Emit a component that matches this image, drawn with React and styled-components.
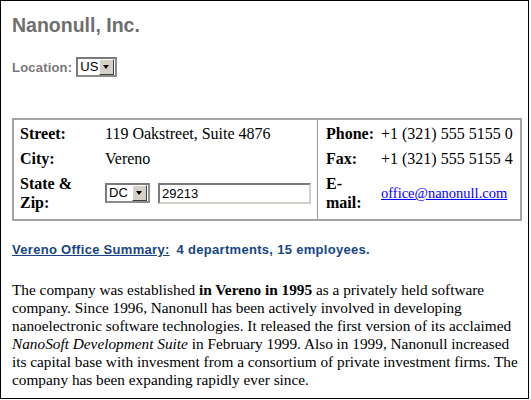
import styled, { createGlobalStyle } from "styled-components";

const GlobalStyle = createGlobalStyle`
  body {
    margin: 0;
    background: #ffffff;
  }
`;

const App = () => {
  return (
    <>
      <GlobalStyle />
      <Frame>
        <Title>Nanonull, Inc.</Title>
        <LocationRow>
          <LocationLabel>Location:</LocationLabel>
          <SelectBox $width={41}>
            <SelectText>US</SelectText>
            <SelectButton />
          </SelectBox>
        </LocationRow>

        <AddressTable>
          <AddressCell>
            <FieldGrid $labelWidth={78} $gap={7}>
              <FieldLabel>Street:</FieldLabel>
              <FieldValue>119 Oakstreet, Suite 4876</FieldValue>
              <FieldLabel>City:</FieldLabel>
              <FieldValue>Vereno</FieldValue>
              <FieldLabel $tall>State &amp; Zip:</FieldLabel>
              <FieldValue $tall>
                <ZipRow>
                  <SelectBox $width={45}>
                    <SelectText>DC</SelectText>
                    <SelectButton />
                  </SelectBox>
                  <ZipInput>29213</ZipInput>
                </ZipRow>
              </FieldValue>
            </FieldGrid>
          </AddressCell>
          <ContactCell>
            <FieldGrid $labelWidth={48} $gap={7}>
              <FieldLabel>Phone:</FieldLabel>
              <FieldValue>+1 (321) 555 5155 0</FieldValue>
              <FieldLabel>Fax:</FieldLabel>
              <FieldValue>+1 (321) 555 5155 4</FieldValue>
              <FieldLabel $tall>E-mail:</FieldLabel>
              <FieldValue $tall>
                <MailLink href="#">office@nanonull.com</MailLink>
              </FieldValue>
            </FieldGrid>
          </ContactCell>
        </AddressTable>

        <Summary>
          <SummaryLink href="#">Vereno Office Summary:</SummaryLink>
          <span>4 departments, 15 employees.</span>
        </Summary>

        {/* line breaks follow the reference rendering */}
        <Description>
          The company was established <b>in Vereno in 1995</b> as a privately
          held software
          <br />
          company. Since 1996, Nanonull has been actively involved in
          developing
          <br />
          nanoelectronic software technologies. It released the first version
          of its acclaimed
          <br />
          <i>NanoSoft Development Suite</i> in February 1999. Also in 1999,
          Nanonull increased
          <br />
          its capital base with invesment from a consortium of private
          investment firms. The
          <br />
          company has been expanding rapidly ever since.
        </Description>
      </Frame>
    </>
  );
};

export default App;

const Frame = styled.div`
  box-sizing: border-box;
  width: 529px;
  height: 399px;
  border: 1px solid #000000;
  padding: 13px 11px 0 11px;
  overflow: hidden;
`;

const Title = styled.h1`
  margin: 0;
  font-family: "Liberation Sans", Arial, sans-serif;
  font-size: 19.5px;
  line-height: 22px;
  font-weight: bold;
  color: #6f6f6f;
`;

const LocationRow = styled.div`
  display: flex;
  align-items: center;
  gap: 4px;
  margin-top: 21px;
  height: 20px;
`;

const LocationLabel = styled.span`
  font-family: "Liberation Sans", Arial, sans-serif;
  font-size: 13px;
  font-weight: bold;
  letter-spacing: 0.2px;
  color: #787878;
`;

const SelectBox = styled.div`
  box-sizing: border-box;
  display: flex;
  align-items: center;
  justify-content: space-between;
  width: ${(props) => props.$width}px;
  height: 20px;
  padding: 0 1px 0 2px;
  background: #ffffff;
  border: 2px solid;
  border-color: #7a7a7a #8c8c8c #8c8c8c #7a7a7a;
`;

const SelectText = styled.span`
  font-family: "Liberation Sans", Arial, sans-serif;
  font-size: 13px;
  color: #000000;
  line-height: 16px;
`;

const SelectButton = styled.span`
  box-sizing: border-box;
  position: relative;
  width: 15px;
  height: 16px;
  background: #d4d0c8;
  border: 1px solid;
  border-color: #ffffff #404040 #404040 #ffffff;

  &::after {
    content: "";
    position: absolute;
    left: 3px;
    top: 5px;
    border-left: 3.5px solid transparent;
    border-right: 3.5px solid transparent;
    border-top: 4px solid #000000;
  }
`;

const AddressTable = styled.div`
  box-sizing: border-box;
  display: grid;
  grid-template-columns: 304px 1fr;
  width: 510px;
  margin-top: 41px;
  border: 2px solid #a4a4a4;
`;

const AddressCell = styled.div`
  padding: 1px 6px 4px 6px;
  border-right: 1px solid #9a9a9a;
`;

const ContactCell = styled.div`
  padding: 1px 4px 4px 8px;
`;

const FieldGrid = styled.div`
  display: grid;
  grid-template-columns: ${(props) => props.$labelWidth}px 1fr;
  grid-template-rows: 25px 25px 44px;
  column-gap: ${(props) => props.$gap}px;
  align-items: center;
`;

const FieldLabel = styled.div`
  font-family: "Liberation Serif", "Times New Roman", serif;
  font-size: 16px;
  font-weight: bold;
  line-height: ${(props) => (props.$tall ? "19px" : "25px")};
  color: #000000;
`;

const FieldValue = styled.div`
  font-family: "Liberation Serif", "Times New Roman", serif;
  font-size: 16px;
  line-height: 25px;
  color: #000000;
  white-space: nowrap;
`;

const ZipRow = styled.div`
  display: flex;
  align-items: center;
  gap: 8px;
`;

const ZipInput = styled.div`
  box-sizing: border-box;
  width: 153px;
  height: 21px;
  padding: 0 2px;
  font-family: "Liberation Sans", Arial, sans-serif;
  font-size: 13px;
  line-height: 17px;
  color: #000000;
  background: #ffffff;
  border: 2px solid;
  border-color: #7a7a7a #d4d0c8 #d4d0c8 #7a7a7a;
`;

const MailLink = styled.a`
  font-size: 14.5px;
  color: #0000ff;
  text-decoration: underline;
`;

const Summary = styled.div`
  display: flex;
  gap: 7px;
  margin-top: 21px;
  font-family: "Liberation Sans", Arial, sans-serif;
  font-size: 13px;
  font-weight: bold;
  line-height: 16px;
  letter-spacing: 0.3px;
  color: #164683;
`;

const SummaryLink = styled.a`
  color: #164683;
  text-decoration: underline;
`;

const Description = styled.p`
  margin: 23px 0 0 0;
  font-family: "Liberation Serif", "Times New Roman", serif;
  font-size: 15.3px;
  line-height: 18px;
  white-space: nowrap;
  color: #000000;
`;
